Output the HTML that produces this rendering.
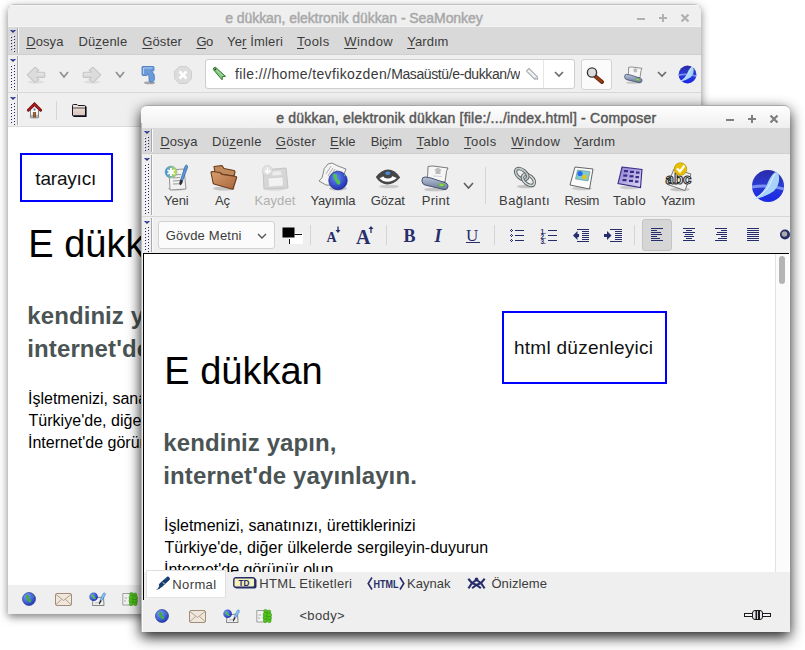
<!DOCTYPE html><html><head><meta charset="utf-8"><style>
html,body{margin:0;padding:0;}
body{width:805px;height:650px;overflow:hidden;position:relative;background:#fff;font-family:"Liberation Sans",sans-serif;}
.t{position:absolute;white-space:nowrap;font-family:"Liberation Sans",sans-serif;}
u{text-decoration:underline;text-underline-offset:2px;text-decoration-thickness:1px;}
svg{overflow:visible}
</style></head><body>
<div style="position:absolute;left:8px;top:4px;width:693px;height:610px;background:#fff;border-radius:6px 6px 0 0;box-shadow:0 3px 9px rgba(0,0,0,0.5);"></div>
<div style="position:absolute;left:8px;top:4px;width:693px;height:23px;background:#efefef;border-radius:6px 6px 0 0;border-top:1px solid #c2c2c2;box-sizing:border-box;"></div>
<div style="position:absolute;left:10px;top:5px;width:689px;height:1px;background:#f6f6f6;"></div>
<div style="position:absolute;left:8px;top:26px;width:693px;height:1px;background:#f3f3f3;"></div>
<div style="position:absolute;left:8px;top:27px;width:693px;height:27px;background:#d9d9d9;"></div>
<div style="position:absolute;left:8px;top:54px;width:693px;height:1px;background:#cfcfcf;"></div>
<div style="position:absolute;left:8px;top:55px;width:693px;height:72px;background:#efefef;"></div>
<div style="position:absolute;left:8px;top:92px;width:693px;height:1px;background:#d8d8d8;"></div>
<div style="position:absolute;left:8px;top:126px;width:693px;height:1px;background:#dcdcdc;"></div>
<div style="position:absolute;left:8px;top:585px;width:693px;height:29px;background:#efefef;"></div>
<div class="t" style="left:225.20px;top:10.55px;font-size:14px;line-height:14px;color:#a8a8a8;letter-spacing:-0.062px;-webkit-text-stroke:0.45px #a8a8a8;">e dükkan, elektronik dükkan - SeaMonkey</div>
<svg style="position:absolute;left:636px;top:13px;" width="12" height="12" viewBox="0 0 12 12"><rect x="1" y="5" width="8" height="2" fill="#b0b0b0"/></svg>
<svg style="position:absolute;left:658px;top:13px;" width="12" height="12" viewBox="0 0 12 12"><rect x="1" y="4" width="8" height="2" fill="#b0b0b0"/><rect x="4" y="1" width="2" height="8" fill="#b0b0b0"/></svg>
<svg style="position:absolute;left:680px;top:13px;" width="12" height="12" viewBox="0 0 12 12"><path d="M1.5 1.5 L8.5 8.5 M8.5 1.5 L1.5 8.5" stroke="#b0b0b0" stroke-width="2.2"/></svg>
<svg style="position:absolute;left:8px;top:27px;" width="12" height="27" viewBox="0 0 12 27"><polygon points="2,3 8,3 5,6" fill="#2a2a8a"/><rect x="4" y="3" width="2" height="1" fill="#6a6ad0"/><rect x="2" y="9" width="1" height="1" fill="#fff"/><rect x="3" y="10" width="1" height="1" fill="#24246e"/><rect x="2" y="12" width="1" height="1" fill="#fff"/><rect x="3" y="13" width="1" height="1" fill="#24246e"/><rect x="2" y="15" width="1" height="1" fill="#fff"/><rect x="3" y="16" width="1" height="1" fill="#24246e"/><rect x="2" y="18" width="1" height="1" fill="#fff"/><rect x="3" y="19" width="1" height="1" fill="#24246e"/><rect x="2" y="21" width="1" height="1" fill="#fff"/><rect x="3" y="22" width="1" height="1" fill="#24246e"/><rect x="5" y="8" width="1" height="1" fill="#fff"/><rect x="6" y="9" width="1" height="1" fill="#24246e"/><rect x="5" y="11" width="1" height="1" fill="#fff"/><rect x="6" y="12" width="1" height="1" fill="#24246e"/><rect x="5" y="14" width="1" height="1" fill="#fff"/><rect x="6" y="15" width="1" height="1" fill="#24246e"/><rect x="5" y="17" width="1" height="1" fill="#fff"/><rect x="6" y="18" width="1" height="1" fill="#24246e"/><rect x="5" y="20" width="1" height="1" fill="#fff"/><rect x="6" y="21" width="1" height="1" fill="#24246e"/><rect x="5" y="23" width="1" height="1" fill="#fff"/><rect x="6" y="24" width="1" height="1" fill="#24246e"/><rect x="9" y="1" width="1" height="25" fill="#a9a9a9"/><rect x="10" y="1" width="1" height="25" fill="#fafafa"/></svg>
<svg style="position:absolute;left:8px;top:55px;" width="12" height="37" viewBox="0 0 12 37"><polygon points="2,4 8,4 5,7" fill="#2a2a8a"/><rect x="4" y="4" width="2" height="1" fill="#6a6ad0"/><rect x="2" y="10" width="1" height="1" fill="#fff"/><rect x="3" y="11" width="1" height="1" fill="#24246e"/><rect x="2" y="13" width="1" height="1" fill="#fff"/><rect x="3" y="14" width="1" height="1" fill="#24246e"/><rect x="2" y="16" width="1" height="1" fill="#fff"/><rect x="3" y="17" width="1" height="1" fill="#24246e"/><rect x="2" y="19" width="1" height="1" fill="#fff"/><rect x="3" y="20" width="1" height="1" fill="#24246e"/><rect x="2" y="22" width="1" height="1" fill="#fff"/><rect x="3" y="23" width="1" height="1" fill="#24246e"/><rect x="2" y="25" width="1" height="1" fill="#fff"/><rect x="3" y="26" width="1" height="1" fill="#24246e"/><rect x="2" y="28" width="1" height="1" fill="#fff"/><rect x="3" y="29" width="1" height="1" fill="#24246e"/><rect x="2" y="31" width="1" height="1" fill="#fff"/><rect x="3" y="32" width="1" height="1" fill="#24246e"/><rect x="5" y="9" width="1" height="1" fill="#fff"/><rect x="6" y="10" width="1" height="1" fill="#24246e"/><rect x="5" y="12" width="1" height="1" fill="#fff"/><rect x="6" y="13" width="1" height="1" fill="#24246e"/><rect x="5" y="15" width="1" height="1" fill="#fff"/><rect x="6" y="16" width="1" height="1" fill="#24246e"/><rect x="5" y="18" width="1" height="1" fill="#fff"/><rect x="6" y="19" width="1" height="1" fill="#24246e"/><rect x="5" y="21" width="1" height="1" fill="#fff"/><rect x="6" y="22" width="1" height="1" fill="#24246e"/><rect x="5" y="24" width="1" height="1" fill="#fff"/><rect x="6" y="25" width="1" height="1" fill="#24246e"/><rect x="5" y="27" width="1" height="1" fill="#fff"/><rect x="6" y="28" width="1" height="1" fill="#24246e"/><rect x="5" y="30" width="1" height="1" fill="#fff"/><rect x="6" y="31" width="1" height="1" fill="#24246e"/><rect x="5" y="33" width="1" height="1" fill="#fff"/><rect x="6" y="34" width="1" height="1" fill="#24246e"/><rect x="9" y="1" width="1" height="35" fill="#a9a9a9"/><rect x="10" y="1" width="1" height="35" fill="#fafafa"/></svg>
<svg style="position:absolute;left:8px;top:93px;" width="12" height="33" viewBox="0 0 12 33"><polygon points="2,4 8,4 5,7" fill="#2a2a8a"/><rect x="4" y="4" width="2" height="1" fill="#6a6ad0"/><rect x="2" y="10" width="1" height="1" fill="#fff"/><rect x="3" y="11" width="1" height="1" fill="#24246e"/><rect x="2" y="13" width="1" height="1" fill="#fff"/><rect x="3" y="14" width="1" height="1" fill="#24246e"/><rect x="2" y="16" width="1" height="1" fill="#fff"/><rect x="3" y="17" width="1" height="1" fill="#24246e"/><rect x="2" y="19" width="1" height="1" fill="#fff"/><rect x="3" y="20" width="1" height="1" fill="#24246e"/><rect x="2" y="22" width="1" height="1" fill="#fff"/><rect x="3" y="23" width="1" height="1" fill="#24246e"/><rect x="2" y="25" width="1" height="1" fill="#fff"/><rect x="3" y="26" width="1" height="1" fill="#24246e"/><rect x="2" y="28" width="1" height="1" fill="#fff"/><rect x="3" y="29" width="1" height="1" fill="#24246e"/><rect x="5" y="9" width="1" height="1" fill="#fff"/><rect x="6" y="10" width="1" height="1" fill="#24246e"/><rect x="5" y="12" width="1" height="1" fill="#fff"/><rect x="6" y="13" width="1" height="1" fill="#24246e"/><rect x="5" y="15" width="1" height="1" fill="#fff"/><rect x="6" y="16" width="1" height="1" fill="#24246e"/><rect x="5" y="18" width="1" height="1" fill="#fff"/><rect x="6" y="19" width="1" height="1" fill="#24246e"/><rect x="5" y="21" width="1" height="1" fill="#fff"/><rect x="6" y="22" width="1" height="1" fill="#24246e"/><rect x="5" y="24" width="1" height="1" fill="#fff"/><rect x="6" y="25" width="1" height="1" fill="#24246e"/><rect x="5" y="27" width="1" height="1" fill="#fff"/><rect x="6" y="28" width="1" height="1" fill="#24246e"/><rect x="5" y="30" width="1" height="1" fill="#fff"/><rect x="6" y="31" width="1" height="1" fill="#24246e"/><rect x="9" y="1" width="1" height="31" fill="#a9a9a9"/><rect x="10" y="1" width="1" height="31" fill="#fafafa"/></svg>
<div class="t" style="left:26.20px;top:34.60px;font-size:13px;line-height:13px;color:#3c3c3c;letter-spacing:0.088px;"><u>D</u>osya</div>
<div class="t" style="left:78.40px;top:34.60px;font-size:13px;line-height:13px;color:#3c3c3c;letter-spacing:0.169px;">Dü<u>z</u>enle</div>
<div class="t" style="left:142.20px;top:34.60px;font-size:13px;line-height:13px;color:#3c3c3c;letter-spacing:0.131px;"><u>G</u>öster</div>
<div class="t" style="left:196.40px;top:34.60px;font-size:13px;line-height:13px;color:#3c3c3c;letter-spacing:-0.622px;"><u>G</u>o</div>
<div class="t" style="left:227.10px;top:34.60px;font-size:13px;line-height:13px;color:#3c3c3c;letter-spacing:0.146px;">Ye<u>r</u> İmleri</div>
<div class="t" style="left:297.00px;top:34.60px;font-size:13px;line-height:13px;color:#3c3c3c;letter-spacing:0.448px;"><u>T</u>ools</div>
<div class="t" style="left:344.20px;top:34.60px;font-size:13px;line-height:13px;color:#3c3c3c;letter-spacing:0.458px;"><u>W</u>indow</div>
<div class="t" style="left:407.20px;top:34.60px;font-size:13px;line-height:13px;color:#3c3c3c;letter-spacing:0.060px;"><u>Y</u>ardım</div>
<svg style="position:absolute;left:24px;top:62px;" width="24" height="24" viewBox="0 0 24 24"><ellipse cx="12" cy="20" rx="8" ry="1.6" fill="#000" opacity="0.07"/><path d="M3.2 12.8 L11.2 5.2 L14.8 8.3 L12.4 10.2 L20 10.2 Q20.8 10.2 20.8 11.2 L20.8 14.4 Q20.8 15.4 20 15.4 L12.4 15.4 L14.8 17.6 L11.2 20.6 Z" fill="#dcdcdc" stroke="#c6c6c6" stroke-width="1.1" stroke-linejoin="round"/><path d="M12.5 12 L19.5 12" stroke="#e8e8e8" stroke-width="1"/></svg>
<svg style="position:absolute;left:58.5px;top:70.5px;" width="10" height="7" viewBox="0 0 10 7"><path d="M1 1 L5.0 6 L9 1" fill="none" stroke="#8c8c8c" stroke-width="1.6"/></svg>
<svg style="position:absolute;left:80px;top:62px;" width="24" height="24" viewBox="0 0 24 24"><g transform="translate(24,0) scale(-1,1)"><ellipse cx="12" cy="20" rx="8" ry="1.6" fill="#000" opacity="0.07"/><path d="M3.2 12.8 L11.2 5.2 L14.8 8.3 L12.4 10.2 L20 10.2 Q20.8 10.2 20.8 11.2 L20.8 14.4 Q20.8 15.4 20 15.4 L12.4 15.4 L14.8 17.6 L11.2 20.6 Z" fill="#dcdcdc" stroke="#c6c6c6" stroke-width="1.1" stroke-linejoin="round"/><path d="M12.5 12 L19.5 12" stroke="#e8e8e8" stroke-width="1"/></g></svg>
<svg style="position:absolute;left:114.5px;top:70.5px;" width="10" height="7" viewBox="0 0 10 7"><path d="M1 1 L5.0 6 L9 1" fill="none" stroke="#8c8c8c" stroke-width="1.6"/></svg>
<svg style="position:absolute;left:140px;top:64px;" width="17" height="21" viewBox="0 0 17 21"><ellipse cx="9.5" cy="18.8" rx="5.5" ry="1.5" fill="#000" opacity="0.3"/><path d="M2.5 2.5 L13 2.5 Q14 2.5 14 3.5 L14 6 Q14 7 13 7 L11.5 7 Q15 10 14.5 14.5 Q14 18.5 11 18.3 Q8.5 18 9 14.5 Q9.5 11.5 7.5 9.5 L7.5 10.5 Q7.5 11.5 6.5 11.5 L3 11.5 Q2 11.5 2 10.5 L2 3 Q2 2.5 2.5 2.5 Z" fill="#6a9ad8" stroke="#4c7cc0" stroke-width="0.9"/><path d="M3.5 4 L12.5 4 M3.5 4 L3.5 10" stroke="#b0cdf2" stroke-width="1.1"/></svg>
<svg style="position:absolute;left:174px;top:66px;" width="18" height="18" viewBox="0 0 18 18"><path d="M5.3 0.5 L12.7 0.5 L17.5 5.3 L17.5 12.7 L12.7 17.5 L5.3 17.5 L0.5 12.7 L0.5 5.3 Z" fill="#dcdcdc" stroke="#cfcfcf"/><path d="M5.5 5.5 L12.5 12.5 M12.5 5.5 L5.5 12.5" stroke="#fff" stroke-width="2.6"/></svg>
<div style="position:absolute;left:205px;top:59px;width:370px;height:30px;background:#fff;border:1px solid #cdcdcd;border-radius:3px;box-sizing:border-box;"></div>
<div style="position:absolute;left:543px;top:60px;width:1px;height:28px;background:#e6e6e6;"></div>
<svg style="position:absolute;left:212px;top:66px;" width="15" height="15" viewBox="0 0 15 15"><path d="M1.3 3.5 Q1.2 1.2 3.5 1.3 L13.5 10.3 L10.4 10.6 L10.1 13.8 Z" fill="#86c884" stroke="#2e7a2a" stroke-width="1" stroke-linejoin="round"/><circle cx="3.3" cy="3.3" r="0.9" fill="#1a3a1a"/><path d="M5 4.5 L11 10" stroke="#b8e4b4" stroke-width="0.8"/></svg>
<div style="position:absolute;left:234px;top:60px;width:286px;height:28px;overflow:hidden">
<div class="t" style="left:1.00px;top:7.15px;font-size:14px;line-height:14px;color:#3a3a3a;letter-spacing:0.370px;">file:///home/tevfikozden/</div>
<div class="t" style="left:157.20px;top:7.15px;font-size:14px;line-height:14px;color:#3a3a3a;letter-spacing:-0.390px;">Masaüstü/e-dukkan/w</div>
</div>
<svg style="position:absolute;left:525px;top:67px;" width="14" height="14" viewBox="0 0 14 14"><path d="M1.5 4 L4 1.5 L12.5 10 L12.5 12.5 L10.5 11 L10 12.5 Z" fill="#f4f4f4" stroke="#a8b0b8" stroke-width="1.1" stroke-linejoin="round"/></svg>
<svg style="position:absolute;left:554px;top:71px;" width="10" height="6" viewBox="0 0 10 6"><path d="M1 1 L5.0 5 L9 1" fill="none" stroke="#6a6a6a" stroke-width="1.6"/></svg>
<div style="position:absolute;left:581px;top:59px;width:31px;height:31px;background:#fbfbfb;border:1px solid #d4d4d4;border-radius:3px;box-sizing:border-box;"></div>
<svg style="position:absolute;left:586px;top:66px;" width="20" height="19" viewBox="0 0 20 19"><path d="M9.5 10.5 L16 16" stroke="#5a2008" stroke-width="4" stroke-linecap="round"/><path d="M9.5 10.5 L15.5 15.5" stroke="#9a3a12" stroke-width="2.4" stroke-linecap="round"/><circle cx="6" cy="6.5" r="4.6" fill="#dcdcdc" stroke="#3a3a3a" stroke-width="1.4"/></svg>
<svg style="position:absolute;left:624px;top:66px" width="20" height="18" viewBox="0 0 30 26"><ellipse cx="14" cy="24.5" rx="11" ry="1.8" fill="#000" opacity="0.18"/><path d="M7 1.5 Q10 1 12 1 L27 3 Q25 6 25 10 L24 17 L6 16 Q7 8 7 1.5 Z" fill="#f6f6f6" stroke="#6a6a6a" stroke-width="1.1"/><path d="M13 5 L17 2.5 L21 5.5 L19.5 5.5 L19.5 9 L14.5 9 L14.5 5.5 Z" fill="#bcbcbc"/><defs><linearGradient id="pb2" x1="0" y1="0" x2="0" y2="1"><stop offset="0" stop-color="#b8c4d8"/><stop offset="1" stop-color="#6a7898"/></linearGradient></defs><path d="M1 15 Q1 12 4 12 L10 13 L25 18 Q27 19 27 21 L26.5 23 Q26 25 23 24.5 L4 20 Q1 19 1 16 Z" fill="url(#pb2)" stroke="#3a4666" stroke-width="1.1"/><ellipse cx="20.5" cy="20" rx="2.8" ry="1.4" fill="#8ee050" stroke="#4a9a20" stroke-width="0.5"/></svg>
<svg style="position:absolute;left:657px;top:71px;" width="10" height="6" viewBox="0 0 10 6"><path d="M1 1 L5.0 5 L9 1" fill="none" stroke="#6a6a6a" stroke-width="1.6"/></svg>
<svg style="position:absolute;left:677.5px;top:64.5px" width="19.0" height="19.0" viewBox="-17 -17 34 34"><defs><linearGradient id="lg1" x1="0" y1="0" x2="0" y2="1"><stop offset="0" stop-color="#2a2aa8"/><stop offset="0.45" stop-color="#2b3bd0"/><stop offset="1" stop-color="#1a28e8"/></linearGradient></defs><circle cx="0" cy="0" r="16" fill="url(#lg1)"/><path d="M-16 -0.5 Q0 -3.5 16 1.5 L16 4.5 Q0 -0.5 -16 2.5 Z" fill="#8aa0f8" opacity="0.85"/><path d="M-15.5 13.5 Q-6 8.5 -1.5 0 Q1.5 -9 6.5 -13.5 Q10.5 -14.5 11 -9.5 Q12 -2 6 5 Q-3 11.5 -15.5 13.5 Z" fill="#a8d4fa"/><path d="M-15.5 13.5 Q-3 8 2 -2 Q4.5 -8 7 -12" fill="none" stroke="#e8f4ff" stroke-width="0.9"/></svg>
<svg style="position:absolute;left:26px;top:101px;" width="17" height="18" viewBox="0 0 17 18"><ellipse cx="8.5" cy="16.5" rx="5" ry="1.2" fill="#000" opacity="0.2"/><path d="M4.5 8.5 L8.5 5 L12.5 8.5 L12.5 16 L4.5 16 Z" fill="#f8f8f8" stroke="#777" stroke-width="0.9"/><path d="M5 14.5 L12 14.5" stroke="#bbb" stroke-width="1.5"/><path d="M2.3 9.3 L8.5 3 L14.7 9.3" fill="none" stroke="#6a0c0c" stroke-width="2.8" stroke-linecap="round"/><path d="M2.6 9 L8.5 3.2 L14.4 9" fill="none" stroke="#b41c1c" stroke-width="1.4" stroke-linecap="round"/><rect x="7.2" y="11.5" width="2.6" height="4.5" fill="#a8642a" stroke="#5a3010" stroke-width="0.5"/><rect x="7.6" y="7.6" width="1.8" height="1.8" fill="#4a6a98"/></svg>
<div style="position:absolute;left:56px;top:101px;width:1px;height:19px;background:#d6d6d6;"></div>
<svg style="position:absolute;left:71px;top:103px;" width="16" height="15" viewBox="0 0 16 15"><defs><linearGradient id="fd" x1="0" y1="0" x2="0" y2="1"><stop offset="0" stop-color="#f2e4dc"/><stop offset="1" stop-color="#d8c4bc"/></linearGradient></defs><path d="M1.5 2.5 Q1.5 1.5 2.5 1.5 L6 1.5 L7 2.5 L13.5 2.5 Q14.5 2.5 14.5 3.5 L14.5 13 L2.5 13 Q1.5 13 1.5 12 Z" fill="url(#fd)" stroke="#1a1a2a" stroke-width="1"/><path d="M2 5 L14 5" stroke="#3a3a3a" stroke-width="0.9"/><path d="M2.5 13.2 L14.8 13.2 L14.8 3.5" fill="none" stroke="#0a0a1a" stroke-width="1.6"/></svg>
<div style="position:absolute;left:20px;top:153px;width:93px;height:49px;border:2px solid #0000ff;box-sizing:border-box;"></div>
<div class="t" style="left:35.30px;top:169.32px;font-size:19px;line-height:19px;color:#111;letter-spacing:-0.187px;">tarayıcı</div>
<div class="t" style="left:28.30px;top:224.73px;font-size:38px;line-height:38px;color:#000;letter-spacing:0.000px;">E dükkan</div>
<div class="t" style="left:27.30px;top:304.28px;font-size:24px;line-height:24px;color:#4a5454;font-weight:bold;letter-spacing:0.080px;">kendiniz yapın,</div>
<div class="t" style="left:27.30px;top:337.28px;font-size:24px;line-height:24px;color:#4a5454;font-weight:bold;letter-spacing:0.110px;">internet'de yayınlayın.</div>
<div class="t" style="left:28.00px;top:390.66px;font-size:16px;line-height:16px;color:#000;letter-spacing:0.000px;">İşletmenizi, sanatınızı, ürettiklerinizi</div>
<div class="t" style="left:28.50px;top:412.96px;font-size:16px;line-height:16px;color:#000;letter-spacing:0.030px;">Türkiye'de, diğer ülkelerde sergileyin-duyurun</div>
<div class="t" style="left:28.00px;top:434.96px;font-size:16px;line-height:16px;color:#000;letter-spacing:0.000px;">İnternet'de görünür olun</div>
<svg style="position:absolute;left:22px;top:592px;" width="14" height="14" viewBox="0 0 14 14"><defs><radialGradient id="gg" cx="0.35" cy="0.3" r="0.75"><stop offset="0" stop-color="#7aa0ff"/><stop offset="1" stop-color="#1f35b8"/></radialGradient></defs><circle cx="7" cy="7" r="6.5" fill="url(#gg)" stroke="#1b2a8a" stroke-width="0.6"/><path d="M4 3 Q6 2 7 4 Q6 6 8 7 Q10 8 9 10 Q7 11 6 9 Q5 7 4 6 Z" fill="#3fae3a"/><path d="M10 3 Q12 4 12 6 L11 5 Z" fill="#3fae3a"/></svg>
<svg style="position:absolute;left:55px;top:593px;" width="17" height="13" viewBox="0 0 17 13"><rect x="0.5" y="0.5" width="16" height="12" rx="1.5" fill="#efe6dc" stroke="#a08c78" stroke-width="1"/><path d="M1 1.5 L8.5 7.5 L16 1.5 M1 11.5 L6.5 6.5 M16 11.5 L10.5 6.5" fill="none" stroke="#b4a08c" stroke-width="1"/></svg>
<svg style="position:absolute;left:88.5px;top:592px;" width="17" height="14" viewBox="0 0 17 14"><path d="M4 6 L14.5 5 L15 13.5 L3.5 13.5 Z" fill="#f0f0f0" stroke="#6a6a6a" stroke-width="0.8"/><path d="M6 11 L11 10.5" stroke="#aaa" stroke-width="0.8"/><defs><radialGradient id="cg" cx="0.35" cy="0.35" r="0.7"><stop offset="0" stop-color="#7a9aff"/><stop offset="1" stop-color="#1a2ab0"/></radialGradient></defs><circle cx="4.6" cy="4.8" r="4.3" fill="url(#cg)"/><path d="M2.5 2.2 Q4.5 2.5 5 4 Q6 5.5 7 6.5 Q6 8 4.5 6.5 Q3.5 5 2.3 4 Z" fill="#50c050"/><path d="M15.5 0.8 Q17 1.5 16 3.5 L12.5 9 L11 8.2 L14 2 Q14.5 0.8 15.5 0.8 Z" fill="#8ac4f4" stroke="#3a7ac0" stroke-width="0.6"/><path d="M11 8.2 L12.5 9 L10.5 12.5 L9.8 12 Z" fill="#222"/></svg>
<svg style="position:absolute;left:122px;top:592px;" width="16" height="14" viewBox="0 0 16 14"><path d="M0.8 1.5 L10 1.5 L10 13 L0.8 13 Z" fill="#f2f2f2" stroke="#8a8a8a" stroke-width="0.8"/><path d="M2.5 6 L5 6 M2 9 L4 9" stroke="#aaa" stroke-width="1"/><g fill="#52c41a" stroke="#2a8a0a" stroke-width="0.5"><circle cx="9.5" cy="2.2" r="1.8"/><circle cx="13" cy="2.8" r="1.8"/><rect x="7.2" y="3.5" width="4.5" height="4" rx="1.5"/><rect x="11" y="4" width="4.5" height="4" rx="1.5"/><rect x="7" y="7" width="4.5" height="3.5" rx="1.5"/><rect x="11" y="7.5" width="4.5" height="3.5" rx="1.5"/><rect x="7.5" y="10" width="3.5" height="3.5" rx="1.2"/><rect x="11.5" y="10.5" width="3.5" height="3" rx="1.2"/></g></svg>
<div style="position:absolute;left:141px;top:105px;width:649px;height:527px;background:#efefef;border-radius:6px 6px 0 0;box-shadow:0 5px 14px rgba(0,0,0,0.9);"></div>
<div style="position:absolute;left:141px;top:105px;width:649px;height:23px;background:linear-gradient(#fefefe,#efefef);border-radius:6px 6px 0 0;border-top:1px solid #a8a8a8;box-sizing:border-box;"></div>
<div style="position:absolute;left:141px;top:123px;width:1px;height:509px;background:#b8b8b8;"></div>
<div style="position:absolute;left:142px;top:600px;width:1px;height:32px;background:#fafafa;"></div>
<div style="position:absolute;left:142px;top:128px;width:648px;height:25px;background:#d9d9d9;"></div>
<div style="position:absolute;left:142px;top:153px;width:648px;height:1px;background:#cfcfcf;"></div>
<div style="position:absolute;left:142px;top:216px;width:648px;height:1px;background:#d6d6d6;"></div>
<div class="t" style="left:276.20px;top:110.75px;font-size:14px;line-height:14px;color:#575757;letter-spacing:0.211px;-webkit-text-stroke:0.45px #575757;">e dükkan, elektronik dükkan [file:/.../index.html] - Composer</div>
<svg style="position:absolute;left:725px;top:114px;" width="12" height="12" viewBox="0 0 12 12"><rect x="1" y="5" width="8" height="2" fill="#7e7e7e"/></svg>
<svg style="position:absolute;left:747px;top:114px;" width="12" height="12" viewBox="0 0 12 12"><rect x="1" y="4" width="8" height="2" fill="#7e7e7e"/><rect x="4" y="1" width="2" height="8" fill="#7e7e7e"/></svg>
<svg style="position:absolute;left:769px;top:114px;" width="12" height="12" viewBox="0 0 12 12"><path d="M1.5 1.5 L8.5 8.5 M8.5 1.5 L1.5 8.5" stroke="#7e7e7e" stroke-width="2.2"/></svg>
<svg style="position:absolute;left:142px;top:128px;" width="12" height="25" viewBox="0 0 12 25"><polygon points="2,3 8,3 5,6" fill="#2a2a8a"/><rect x="4" y="3" width="2" height="1" fill="#6a6ad0"/><rect x="2" y="9" width="1" height="1" fill="#fff"/><rect x="3" y="10" width="1" height="1" fill="#24246e"/><rect x="2" y="12" width="1" height="1" fill="#fff"/><rect x="3" y="13" width="1" height="1" fill="#24246e"/><rect x="2" y="15" width="1" height="1" fill="#fff"/><rect x="3" y="16" width="1" height="1" fill="#24246e"/><rect x="2" y="18" width="1" height="1" fill="#fff"/><rect x="3" y="19" width="1" height="1" fill="#24246e"/><rect x="2" y="21" width="1" height="1" fill="#fff"/><rect x="3" y="22" width="1" height="1" fill="#24246e"/><rect x="5" y="8" width="1" height="1" fill="#fff"/><rect x="6" y="9" width="1" height="1" fill="#24246e"/><rect x="5" y="11" width="1" height="1" fill="#fff"/><rect x="6" y="12" width="1" height="1" fill="#24246e"/><rect x="5" y="14" width="1" height="1" fill="#fff"/><rect x="6" y="15" width="1" height="1" fill="#24246e"/><rect x="5" y="17" width="1" height="1" fill="#fff"/><rect x="6" y="18" width="1" height="1" fill="#24246e"/><rect x="5" y="20" width="1" height="1" fill="#fff"/><rect x="6" y="21" width="1" height="1" fill="#24246e"/><rect x="9" y="1" width="1" height="23" fill="#a9a9a9"/><rect x="10" y="1" width="1" height="23" fill="#fafafa"/></svg>
<svg style="position:absolute;left:142px;top:154px;" width="12" height="62" viewBox="0 0 12 62"><polygon points="2,4 8,4 5,7" fill="#2a2a8a"/><rect x="4" y="4" width="2" height="1" fill="#6a6ad0"/><rect x="2" y="10" width="1" height="1" fill="#fff"/><rect x="3" y="11" width="1" height="1" fill="#24246e"/><rect x="2" y="13" width="1" height="1" fill="#fff"/><rect x="3" y="14" width="1" height="1" fill="#24246e"/><rect x="2" y="16" width="1" height="1" fill="#fff"/><rect x="3" y="17" width="1" height="1" fill="#24246e"/><rect x="2" y="19" width="1" height="1" fill="#fff"/><rect x="3" y="20" width="1" height="1" fill="#24246e"/><rect x="2" y="22" width="1" height="1" fill="#fff"/><rect x="3" y="23" width="1" height="1" fill="#24246e"/><rect x="2" y="25" width="1" height="1" fill="#fff"/><rect x="3" y="26" width="1" height="1" fill="#24246e"/><rect x="2" y="28" width="1" height="1" fill="#fff"/><rect x="3" y="29" width="1" height="1" fill="#24246e"/><rect x="2" y="31" width="1" height="1" fill="#fff"/><rect x="3" y="32" width="1" height="1" fill="#24246e"/><rect x="2" y="34" width="1" height="1" fill="#fff"/><rect x="3" y="35" width="1" height="1" fill="#24246e"/><rect x="2" y="37" width="1" height="1" fill="#fff"/><rect x="3" y="38" width="1" height="1" fill="#24246e"/><rect x="2" y="40" width="1" height="1" fill="#fff"/><rect x="3" y="41" width="1" height="1" fill="#24246e"/><rect x="2" y="43" width="1" height="1" fill="#fff"/><rect x="3" y="44" width="1" height="1" fill="#24246e"/><rect x="2" y="46" width="1" height="1" fill="#fff"/><rect x="3" y="47" width="1" height="1" fill="#24246e"/><rect x="2" y="49" width="1" height="1" fill="#fff"/><rect x="3" y="50" width="1" height="1" fill="#24246e"/><rect x="2" y="52" width="1" height="1" fill="#fff"/><rect x="3" y="53" width="1" height="1" fill="#24246e"/><rect x="2" y="55" width="1" height="1" fill="#fff"/><rect x="3" y="56" width="1" height="1" fill="#24246e"/><rect x="2" y="58" width="1" height="1" fill="#fff"/><rect x="3" y="59" width="1" height="1" fill="#24246e"/><rect x="5" y="9" width="1" height="1" fill="#fff"/><rect x="6" y="10" width="1" height="1" fill="#24246e"/><rect x="5" y="12" width="1" height="1" fill="#fff"/><rect x="6" y="13" width="1" height="1" fill="#24246e"/><rect x="5" y="15" width="1" height="1" fill="#fff"/><rect x="6" y="16" width="1" height="1" fill="#24246e"/><rect x="5" y="18" width="1" height="1" fill="#fff"/><rect x="6" y="19" width="1" height="1" fill="#24246e"/><rect x="5" y="21" width="1" height="1" fill="#fff"/><rect x="6" y="22" width="1" height="1" fill="#24246e"/><rect x="5" y="24" width="1" height="1" fill="#fff"/><rect x="6" y="25" width="1" height="1" fill="#24246e"/><rect x="5" y="27" width="1" height="1" fill="#fff"/><rect x="6" y="28" width="1" height="1" fill="#24246e"/><rect x="5" y="30" width="1" height="1" fill="#fff"/><rect x="6" y="31" width="1" height="1" fill="#24246e"/><rect x="5" y="33" width="1" height="1" fill="#fff"/><rect x="6" y="34" width="1" height="1" fill="#24246e"/><rect x="5" y="36" width="1" height="1" fill="#fff"/><rect x="6" y="37" width="1" height="1" fill="#24246e"/><rect x="5" y="39" width="1" height="1" fill="#fff"/><rect x="6" y="40" width="1" height="1" fill="#24246e"/><rect x="5" y="42" width="1" height="1" fill="#fff"/><rect x="6" y="43" width="1" height="1" fill="#24246e"/><rect x="5" y="45" width="1" height="1" fill="#fff"/><rect x="6" y="46" width="1" height="1" fill="#24246e"/><rect x="5" y="48" width="1" height="1" fill="#fff"/><rect x="6" y="49" width="1" height="1" fill="#24246e"/><rect x="5" y="51" width="1" height="1" fill="#fff"/><rect x="6" y="52" width="1" height="1" fill="#24246e"/><rect x="5" y="54" width="1" height="1" fill="#fff"/><rect x="6" y="55" width="1" height="1" fill="#24246e"/><rect x="5" y="57" width="1" height="1" fill="#fff"/><rect x="6" y="58" width="1" height="1" fill="#24246e"/><rect x="9" y="1" width="1" height="60" fill="#a9a9a9"/><rect x="10" y="1" width="1" height="60" fill="#fafafa"/></svg>
<svg style="position:absolute;left:142px;top:217px;" width="12" height="36" viewBox="0 0 12 36"><polygon points="2,4 8,4 5,7" fill="#2a2a8a"/><rect x="4" y="4" width="2" height="1" fill="#6a6ad0"/><rect x="2" y="10" width="1" height="1" fill="#fff"/><rect x="3" y="11" width="1" height="1" fill="#24246e"/><rect x="2" y="13" width="1" height="1" fill="#fff"/><rect x="3" y="14" width="1" height="1" fill="#24246e"/><rect x="2" y="16" width="1" height="1" fill="#fff"/><rect x="3" y="17" width="1" height="1" fill="#24246e"/><rect x="2" y="19" width="1" height="1" fill="#fff"/><rect x="3" y="20" width="1" height="1" fill="#24246e"/><rect x="2" y="22" width="1" height="1" fill="#fff"/><rect x="3" y="23" width="1" height="1" fill="#24246e"/><rect x="2" y="25" width="1" height="1" fill="#fff"/><rect x="3" y="26" width="1" height="1" fill="#24246e"/><rect x="2" y="28" width="1" height="1" fill="#fff"/><rect x="3" y="29" width="1" height="1" fill="#24246e"/><rect x="2" y="31" width="1" height="1" fill="#fff"/><rect x="3" y="32" width="1" height="1" fill="#24246e"/><rect x="5" y="9" width="1" height="1" fill="#fff"/><rect x="6" y="10" width="1" height="1" fill="#24246e"/><rect x="5" y="12" width="1" height="1" fill="#fff"/><rect x="6" y="13" width="1" height="1" fill="#24246e"/><rect x="5" y="15" width="1" height="1" fill="#fff"/><rect x="6" y="16" width="1" height="1" fill="#24246e"/><rect x="5" y="18" width="1" height="1" fill="#fff"/><rect x="6" y="19" width="1" height="1" fill="#24246e"/><rect x="5" y="21" width="1" height="1" fill="#fff"/><rect x="6" y="22" width="1" height="1" fill="#24246e"/><rect x="5" y="24" width="1" height="1" fill="#fff"/><rect x="6" y="25" width="1" height="1" fill="#24246e"/><rect x="5" y="27" width="1" height="1" fill="#fff"/><rect x="6" y="28" width="1" height="1" fill="#24246e"/><rect x="5" y="30" width="1" height="1" fill="#fff"/><rect x="6" y="31" width="1" height="1" fill="#24246e"/><rect x="5" y="33" width="1" height="1" fill="#fff"/><rect x="6" y="34" width="1" height="1" fill="#24246e"/><rect x="9" y="1" width="1" height="34" fill="#a9a9a9"/><rect x="10" y="1" width="1" height="34" fill="#fafafa"/></svg>
<div class="t" style="left:160.20px;top:134.70px;font-size:13px;line-height:13px;color:#3c3c3c;letter-spacing:0.088px;"><u>D</u>osya</div>
<div class="t" style="left:212.10px;top:134.70px;font-size:13px;line-height:13px;color:#3c3c3c;letter-spacing:0.283px;">Dü<u>z</u>enle</div>
<div class="t" style="left:275.80px;top:134.70px;font-size:13px;line-height:13px;color:#3c3c3c;letter-spacing:0.214px;"><u>G</u>öster</div>
<div class="t" style="left:330.10px;top:134.70px;font-size:13px;line-height:13px;color:#3c3c3c;letter-spacing:0.051px;"><u>E</u>kle</div>
<div class="t" style="left:370.70px;top:134.70px;font-size:13px;line-height:13px;color:#3c3c3c;letter-spacing:-0.096px;">Bi<u>ç</u>im</div>
<div class="t" style="left:416.50px;top:134.70px;font-size:13px;line-height:13px;color:#3c3c3c;letter-spacing:0.381px;"><u>T</u>ablo</div>
<div class="t" style="left:464.00px;top:134.70px;font-size:13px;line-height:13px;color:#3c3c3c;letter-spacing:0.448px;"><u>T</u>ools</div>
<div class="t" style="left:511.20px;top:134.70px;font-size:13px;line-height:13px;color:#3c3c3c;letter-spacing:0.475px;"><u>W</u>indow</div>
<div class="t" style="left:573.80px;top:134.70px;font-size:13px;line-height:13px;color:#3c3c3c;letter-spacing:0.077px;"><u>Y</u>ardım</div>
<svg style="position:absolute;left:164px;top:164px;" width="25" height="27" viewBox="0 0 25 27"><ellipse cx="13" cy="24.5" rx="9" ry="2" fill="#000" opacity="0.18"/><path d="M5 6 L20 5 L22 25 L6 26 Z" fill="#f2f2f2" stroke="#8a8a8a" stroke-width="0.9"/><path d="M9 11 L17 10.5 M9 14 L16 13.5 M9 17 L17 16.5 M9 20 L15 19.8" stroke="#9a9a9a" stroke-width="1"/><defs><linearGradient id="ys" x1="0" y1="0" x2="1" y2="0"><stop offset="0" stop-color="#3a8ae8"/><stop offset="1" stop-color="#c8e838"/></linearGradient></defs><circle cx="7" cy="8" r="6" fill="url(#ys)" stroke="#6aa0c0" stroke-width="0.5"/><path d="M7 4 L7 12 M3.5 6 L10.5 10 M3.5 10 L10.5 6" stroke="#fff" stroke-width="1.8"/><path d="M22.5 1 Q24 1.5 23.5 3.5 L18.5 17 L16.5 16.2 L21 2.5 Q21.5 1 22.5 1 Z" fill="#5a9ae0" stroke="#2a5a9a" stroke-width="0.7"/><path d="M16.5 16.2 L18.5 17 L17.5 20 Q16 22 15.5 19.5 Z" fill="#333" stroke="#111" stroke-width="0.6"/></svg>
<svg style="position:absolute;left:210px;top:164px;" width="28" height="27" viewBox="0 0 28 27"><ellipse cx="14" cy="24.5" rx="11" ry="2" fill="#000" opacity="0.18"/><defs><linearGradient id="fo" x1="0" y1="0" x2="1" y2="1"><stop offset="0" stop-color="#d9a070"/><stop offset="1" stop-color="#a8653a"/></linearGradient></defs><path d="M4 2.5 L12 1.5 L14 4.5 L24 6.5 Q25 7 25 8 L24 12 L5 9 Z" fill="#c08a5a" stroke="#6a3a1a" stroke-width="1.1" stroke-linejoin="round"/><path d="M1 8.5 Q1 7.5 2 7.5 L10 8.5 L12 10.5 L26 12.5 Q27 13 26.5 14 L23 25 Q22.5 25.5 21.5 25 L4 20 Q3 19.5 3 18.5 Z" fill="url(#fo)" stroke="#6a3a1a" stroke-width="1.1" stroke-linejoin="round"/></svg>
<svg style="position:absolute;left:261px;top:165px;" width="28" height="26" viewBox="0 0 28 26"><ellipse cx="14" cy="24" rx="10" ry="1.8" fill="#000" opacity="0.08"/><path d="M2 5 L25 3 L27 23 L3 24 Z" fill="#d6d6d6" stroke="#c4c4c4" stroke-width="1"/><path d="M11 6.5 L20 6 L20.5 10 L11.5 10.5 Z" fill="#ececec"/><path d="M7 13 L22 12 L22.5 21 L7.5 22 Z" fill="#f2f2f2" stroke="#cacaca" stroke-width="0.6"/><circle cx="6.5" cy="5.5" r="5" fill="#e2e2e2" stroke="#cfcfcf" stroke-width="0.8"/><path d="M6.5 2.5 L6.5 7.5 M4 5.5 L6.5 8 L9 5.5" fill="none" stroke="#fff" stroke-width="1.4"/></svg>
<svg style="position:absolute;left:318px;top:162px;" width="30" height="29" viewBox="0 0 30 29"><ellipse cx="20" cy="26.5" rx="9" ry="2" fill="#000" opacity="0.18"/><path d="M1 19 Q5 16 5 12 Q5 6 10 2 L14 1 Q19 4 28 7 L26 12 Q20 14 16 22 Q12 24 8 23 Z" fill="#f4f4f4" stroke="#7a7a7a" stroke-width="0.9"/><path d="M8 12 L13 4 M10 14 L15 6 M12 15 L17 7 M14 16 L19 8" stroke="#a0a0a0" stroke-width="0.8"/><defs><radialGradient id="gl" cx="0.4" cy="0.35" r="0.7"><stop offset="0" stop-color="#6a8aff"/><stop offset="1" stop-color="#1a2aa8"/></radialGradient></defs><circle cx="20" cy="18.5" r="9.3" fill="url(#gl)" stroke="#10187a" stroke-width="0.6"/><path d="M15 12 Q18 11 19 13 Q18 16 21 18 Q23 19 22 22 Q20 24 18.5 21 Q17 18 15.5 16 Z" fill="#50c050"/><path d="M26 12 Q28 13 27.5 14.5 L26 13.5 Z" fill="#50c050"/></svg>
<svg style="position:absolute;left:375px;top:168px;" width="26" height="21" viewBox="0 0 26 21"><ellipse cx="14" cy="18.5" rx="10" ry="1.8" fill="#000" opacity="0.15"/><path d="M0.8 9 Q6.5 1.5 13 1.5 Q20 1.5 25.2 9.5 Q19 16.5 12 16.5 Q5 16 0.8 9 Z" fill="#464646"/><path d="M4.5 10.2 Q8.5 7.5 13 7.5 Q18 7.5 21.8 10 Q17.5 13.8 12.5 13.8 Q8 13.8 4.5 10.2 Z" fill="#fff"/><ellipse cx="12.8" cy="6.2" rx="5.2" ry="4.2" fill="#464646"/><ellipse cx="12.8" cy="5.2" rx="2.6" ry="1.7" fill="#4a8ad8"/></svg>
<svg style="position:absolute;left:421px;top:165px;" width="30" height="26" viewBox="0 0 30 26"><ellipse cx="14" cy="24.5" rx="11" ry="1.8" fill="#000" opacity="0.18"/><path d="M7 1.5 Q10 1 12 1 L27 3 Q25 6 25 10 L24 17 L6 16 Q7 8 7 1.5 Z" fill="#f6f6f6" stroke="#6a6a6a" stroke-width="0.9"/><path d="M13 5 L17 2.5 L21 5.5 L19.5 5.5 L19.5 9 L14.5 9 L14.5 5.5 Z" fill="#bcbcbc"/><path d="M12 11 L21 11.5" stroke="#c8c8c8" stroke-width="0.8"/><defs><linearGradient id="pb" x1="0" y1="0" x2="0" y2="1"><stop offset="0" stop-color="#b8c4d8"/><stop offset="1" stop-color="#6a7898"/></linearGradient></defs><path d="M1 15 Q1 12 4 12 L10 13 L25 18 Q27 19 27 21 L26.5 23 Q26 25 23 24.5 L4 20 Q1 19 1 16 Z" fill="url(#pb)" stroke="#3a4666" stroke-width="0.9"/><ellipse cx="20.5" cy="20" rx="2.8" ry="1.4" fill="#8ee050" stroke="#4a9a20" stroke-width="0.5"/></svg>
<svg style="position:absolute;left:513px;top:166px;" width="24" height="23" viewBox="0 0 24 23"><ellipse cx="13" cy="20.5" rx="9" ry="1.8" fill="#000" opacity="0.18"/><g transform="rotate(40 12 11)"><ellipse cx="7.5" cy="11" rx="7" ry="4.2" fill="none" stroke="#5a6262" stroke-width="3.4"/><ellipse cx="7.5" cy="11" rx="7" ry="4.2" fill="none" stroke="#c4cccc" stroke-width="1.6"/><ellipse cx="16.5" cy="11" rx="7" ry="4.2" fill="none" stroke="#5a6262" stroke-width="3.4"/><ellipse cx="16.5" cy="11" rx="7" ry="4.2" fill="none" stroke="#d0d8d8" stroke-width="1.6"/><path d="M10.5 7 A7 4.2 0 0 1 14.5 11" fill="none" stroke="#5a6262" stroke-width="3.4"/><path d="M10.5 7 A7 4.2 0 0 1 14.5 11" fill="none" stroke="#c4cccc" stroke-width="1.6"/></g></svg>
<svg style="position:absolute;left:569px;top:166px;" width="26" height="25" viewBox="0 0 26 25"><ellipse cx="13" cy="22.5" rx="10" ry="1.8" fill="#000" opacity="0.15"/><path d="M6 1 L24 3 L20.5 23 L1 19 Z" fill="#fbfbfb" stroke="#555" stroke-width="0.9"/><path d="M8.5 4 L21 5.5 L19 15 L6.5 13 Z" fill="#7ccccc" stroke="#5a7a7a" stroke-width="0.5"/><circle cx="11" cy="7.5" r="2.6" fill="#2a6af0"/><circle cx="15.5" cy="11" r="2.2" fill="#f0c010"/></svg>
<svg style="position:absolute;left:617px;top:166px;" width="27" height="24" viewBox="0 0 27 24"><ellipse cx="13" cy="21.5" rx="10" ry="1.8" fill="#000" opacity="0.15"/><defs><linearGradient id="tb" x1="0" y1="0" x2="1" y2="1"><stop offset="0" stop-color="#8a7ad0"/><stop offset="1" stop-color="#e0dcf4"/></linearGradient></defs><path d="M5 1 L25 3.5 L23.5 21.5 L1 17.5 Z" fill="url(#tb)" stroke="#3a2a88" stroke-width="1.1"/><g fill="#3a2a88"><rect x="7" y="4" width="4" height="2.2"/><rect x="13" y="4.8" width="4" height="2.2"/><rect x="19" y="5.5" width="3.5" height="2.2"/><rect x="6.3" y="8.5" width="4" height="2.2"/><rect x="12.5" y="9.2" width="4" height="2.2"/><rect x="18.5" y="10" width="3.5" height="2.2"/><rect x="5.5" y="13" width="4" height="2.2"/><rect x="12" y="13.8" width="4" height="2.2"/><rect x="18" y="14.5" width="3.5" height="2.2"/></g></svg>
<svg style="position:absolute;left:665px;top:162px;" width="28" height="30" viewBox="0 0 28 30"><ellipse cx="15" cy="27.5" rx="10" ry="1.8" fill="#000" opacity="0.18"/><path d="M9 7 L26 12 L20 28.5 L2.5 22.5 Z" fill="#f2f2f2" stroke="#6a6a6a" stroke-width="0.9"/><text x="0.5" y="21.5" font-size="14" font-weight="bold" font-family="Liberation Sans" fill="#fff" stroke="#2a2a2a" stroke-width="1" textLength="26" lengthAdjust="spacingAndGlyphs">abc</text><circle cx="15.5" cy="7" r="6.3" fill="#e8c000" stroke="#b08a00" stroke-width="0.6"/><path d="M12 6.5 L15 9.5 L19.5 3.5" fill="none" stroke="#fff" stroke-width="2.3"/></svg>
<div class="t" style="left:164.00px;top:194.00px;font-size:13px;line-height:13px;color:#3c3c3c;letter-spacing:-0.036px;">Yeni</div>
<div class="t" style="left:214.90px;top:194.00px;font-size:13px;line-height:13px;color:#3c3c3c;letter-spacing:-0.086px;">Aç</div>
<div class="t" style="left:254.50px;top:194.00px;font-size:13px;line-height:13px;color:#b0b0b0;letter-spacing:0.069px;">Kaydet</div>
<div class="t" style="left:310.40px;top:194.00px;font-size:13px;line-height:13px;color:#3c3c3c;letter-spacing:-0.171px;">Yayımla</div>
<div class="t" style="left:370.80px;top:194.00px;font-size:13px;line-height:13px;color:#3c3c3c;letter-spacing:-0.138px;">Gözat</div>
<div class="t" style="left:421.70px;top:194.00px;font-size:13px;line-height:13px;color:#3c3c3c;letter-spacing:0.273px;">Print</div>
<div class="t" style="left:499.10px;top:194.00px;font-size:13px;line-height:13px;color:#3c3c3c;letter-spacing:0.398px;">Bağlantı</div>
<div class="t" style="left:564.40px;top:194.00px;font-size:13px;line-height:13px;color:#3c3c3c;letter-spacing:-0.449px;">Resim</div>
<div class="t" style="left:613.10px;top:194.00px;font-size:13px;line-height:13px;color:#3c3c3c;letter-spacing:0.361px;">Tablo</div>
<div class="t" style="left:660.90px;top:194.00px;font-size:13px;line-height:13px;color:#3c3c3c;letter-spacing:-0.395px;">Yazım</div>
<svg style="position:absolute;left:463px;top:181.5px;" width="11" height="7" viewBox="0 0 11 7"><path d="M1 1 L5.5 6 L10 1" fill="none" stroke="#5e5e5e" stroke-width="1.6"/></svg>
<div style="position:absolute;left:485px;top:167px;width:1px;height:37px;background:#d4d4d4;"></div>
<svg style="position:absolute;left:751px;top:169px" width="34" height="34" viewBox="-17 -17 34 34"><defs><linearGradient id="lg2" x1="0" y1="0" x2="0" y2="1"><stop offset="0" stop-color="#2a2aa8"/><stop offset="0.45" stop-color="#2b3bd0"/><stop offset="1" stop-color="#1a28e8"/></linearGradient></defs><circle cx="0" cy="0" r="16" fill="url(#lg2)"/><path d="M-16 -0.5 Q0 -3.5 16 1.5 L16 4.5 Q0 -0.5 -16 2.5 Z" fill="#8aa0f8" opacity="0.85"/><path d="M-15.5 13.5 Q-6 8.5 -1.5 0 Q1.5 -9 6.5 -13.5 Q10.5 -14.5 11 -9.5 Q12 -2 6 5 Q-3 11.5 -15.5 13.5 Z" fill="#a8d4fa"/><path d="M-15.5 13.5 Q-3 8 2 -2 Q4.5 -8 7 -12" fill="none" stroke="#e8f4ff" stroke-width="0.9"/></svg>
<div style="position:absolute;left:158px;top:221px;width:117px;height:28px;background:#fbfbfb;border:1px solid #d2d2d2;border-radius:3px;box-sizing:border-box;"></div>
<div class="t" style="left:165.70px;top:228.60px;font-size:13px;line-height:13px;color:#3c3c3c;letter-spacing:0.207px;">Gövde Metni</div>
<svg style="position:absolute;left:257px;top:232.5px;" width="10" height="6" viewBox="0 0 10 6"><path d="M1 1 L5.0 5 L9 1" fill="none" stroke="#555" stroke-width="1.4"/></svg>
<svg style="position:absolute;left:282px;top:227px;" width="22" height="18" viewBox="0 0 22 18"><rect x="7" y="6" width="14" height="11" fill="#fff"/><path d="M12.5 7.5 L20 7.5 M7.5 12 L7.5 17" stroke="#111" stroke-width="1"/><rect x="0.5" y="0.5" width="12" height="10" fill="#000"/></svg>
<div style="position:absolute;left:310px;top:225px;width:1px;height:20px;background:#d4d4d4;"></div>
<div class="t" style="left:326.50px;top:230.65px;font-size:14px;line-height:14px;color:#272d6a;letter-spacing:0.000px;font-family:'Liberation Serif',serif;font-weight:bold;">A</div>
<svg style="position:absolute;left:334px;top:226px;" width="8" height="8" viewBox="0 0 8 8"><path d="M4 0.5 L4 5" stroke="#272d6a" stroke-width="1.3"/><path d="M1.5 4 L6.5 4 L4 7 Z" fill="#272d6a"/></svg>
<div class="t" style="left:356.00px;top:226.57px;font-size:20px;line-height:20px;color:#272d6a;letter-spacing:0.000px;font-family:'Liberation Serif',serif;font-weight:bold;">A</div>
<svg style="position:absolute;left:367px;top:225px;" width="8" height="9" viewBox="0 0 8 9"><path d="M4 3 L4 8" stroke="#272d6a" stroke-width="1.3"/><path d="M1.5 4 L6.5 4 L4 1 Z" fill="#272d6a"/></svg>
<div style="position:absolute;left:386px;top:225px;width:1px;height:20px;background:#d4d4d4;"></div>
<div class="t" style="left:403.50px;top:226.56px;font-size:18px;line-height:18px;color:#272d6a;font-weight:bold;letter-spacing:0.000px;font-family:'Liberation Serif',serif;">B</div>
<div class="t" style="left:434.50px;top:226.56px;font-size:18px;line-height:18px;color:#272d6a;font-weight:bold;letter-spacing:0.000px;font-family:'Liberation Serif',serif;font-style:italic;">I</div>
<div class="t" style="left:466.00px;top:226.81px;font-size:17px;line-height:17px;color:#272d6a;letter-spacing:0.000px;font-family:'Liberation Serif',serif;">U</div>
<div style="position:absolute;left:466px;top:242px;width:14px;height:1px;background:#272d6a;"></div>
<div style="position:absolute;left:494px;top:225px;width:1px;height:20px;background:#d4d4d4;"></div>
<svg style="position:absolute;left:509px;top:228px;shape-rendering:crispEdges;" width="20" height="16" viewBox="0 0 20 16"><rect x="6" y="2" width="9" height="1" fill="#272d6a"/><rect x="6" y="7" width="9" height="1" fill="#272d6a"/><rect x="6" y="12" width="9" height="1" fill="#272d6a"/><rect x="2" y="1" width="1" height="1" fill="#272d6a"/><rect x="1" y="2" width="1" height="1" fill="#272d6a"/><rect x="3" y="2" width="1" height="1" fill="#272d6a"/><rect x="2" y="3" width="1" height="1" fill="#272d6a"/><rect x="2" y="6" width="1" height="1" fill="#272d6a"/><rect x="1" y="7" width="1" height="1" fill="#272d6a"/><rect x="3" y="7" width="1" height="1" fill="#272d6a"/><rect x="2" y="8" width="1" height="1" fill="#272d6a"/><rect x="2" y="11" width="1" height="1" fill="#272d6a"/><rect x="1" y="12" width="1" height="1" fill="#272d6a"/><rect x="3" y="12" width="1" height="1" fill="#272d6a"/><rect x="2" y="13" width="1" height="1" fill="#272d6a"/></svg>
<svg style="position:absolute;left:541px;top:228px;shape-rendering:crispEdges;" width="20" height="16" viewBox="0 0 20 16"><rect x="7" y="2" width="9" height="1" fill="#272d6a"/><rect x="7" y="7" width="9" height="1" fill="#272d6a"/><rect x="7" y="12" width="9" height="1" fill="#272d6a"/><text x="-0.5" y="5.5" font-size="6.5" font-weight="bold" fill="#272d6a" font-family="Liberation Sans">1.</text><text x="-0.5" y="10.5" font-size="6.5" font-weight="bold" fill="#272d6a" font-family="Liberation Sans">2.</text><text x="-0.5" y="15.5" font-size="6.5" font-weight="bold" fill="#272d6a" font-family="Liberation Sans">3.</text></svg>
<svg style="position:absolute;left:573px;top:228px;shape-rendering:crispEdges;" width="20" height="16" viewBox="0 0 20 16"><rect x="4" y="1" width="12" height="1" fill="#272d6a"/><rect x="9" y="3" width="7" height="1" fill="#272d6a"/><rect x="9" y="5" width="7" height="1" fill="#272d6a"/><rect x="9" y="7" width="7" height="1" fill="#272d6a"/><rect x="9" y="9" width="7" height="1" fill="#272d6a"/><rect x="9" y="11" width="7" height="1" fill="#272d6a"/><rect x="4" y="13" width="12" height="1" fill="#272d6a"/><path d="M0 7.5 L4.5 3 L4.5 12 Z" fill="#272d6a" style="shape-rendering:auto"/><rect x="3" y="6" width="3" height="3" fill="#272d6a"/></svg>
<svg style="position:absolute;left:604px;top:228px;shape-rendering:crispEdges;" width="20" height="16" viewBox="0 0 20 16"><rect x="6" y="1" width="12" height="1" fill="#272d6a"/><rect x="11" y="3" width="7" height="1" fill="#272d6a"/><rect x="11" y="5" width="7" height="1" fill="#272d6a"/><rect x="11" y="7" width="7" height="1" fill="#272d6a"/><rect x="11" y="9" width="7" height="1" fill="#272d6a"/><rect x="11" y="11" width="7" height="1" fill="#272d6a"/><rect x="6" y="13" width="12" height="1" fill="#272d6a"/><path d="M7.5 7.5 L3 3 L3 12 Z" fill="#272d6a" style="shape-rendering:auto"/><rect x="0" y="6" width="4" height="3" fill="#272d6a"/></svg>
<div style="position:absolute;left:634px;top:225px;width:1px;height:20px;background:#d4d4d4;"></div>
<div style="position:absolute;left:642px;top:219px;width:30px;height:32px;background:#d6d6d6;border:1px solid #c4c4c4;border-radius:3px;box-sizing:border-box;"></div>
<svg style="position:absolute;left:651px;top:228px;shape-rendering:crispEdges;" width="20" height="16" viewBox="0 0 20 16"><rect x="0" y="0" width="12" height="1" fill="#272d6a"/><rect x="0" y="2" width="6" height="1" fill="#272d6a"/><rect x="0" y="4" width="10" height="1" fill="#272d6a"/><rect x="0" y="6" width="11" height="1" fill="#272d6a"/><rect x="0" y="8" width="6" height="1" fill="#272d6a"/><rect x="0" y="10" width="9" height="1" fill="#272d6a"/><rect x="0" y="12" width="12" height="1" fill="#272d6a"/></svg>
<svg style="position:absolute;left:683px;top:228px;shape-rendering:crispEdges;" width="20" height="16" viewBox="0 0 20 16"><rect x="0" y="0" width="12" height="1" fill="#272d6a"/><rect x="3" y="2" width="6" height="1" fill="#272d6a"/><rect x="0" y="4" width="12" height="1" fill="#272d6a"/><rect x="2" y="6" width="8" height="1" fill="#272d6a"/><rect x="1" y="8" width="10" height="1" fill="#272d6a"/><rect x="3" y="10" width="6" height="1" fill="#272d6a"/><rect x="0" y="12" width="12" height="1" fill="#272d6a"/></svg>
<svg style="position:absolute;left:715px;top:228px;shape-rendering:crispEdges;" width="20" height="16" viewBox="0 0 20 16"><rect x="0" y="0" width="12" height="1" fill="#272d6a"/><rect x="6" y="2" width="6" height="1" fill="#272d6a"/><rect x="2" y="4" width="10" height="1" fill="#272d6a"/><rect x="1" y="6" width="11" height="1" fill="#272d6a"/><rect x="6" y="8" width="6" height="1" fill="#272d6a"/><rect x="3" y="10" width="9" height="1" fill="#272d6a"/><rect x="0" y="12" width="12" height="1" fill="#272d6a"/></svg>
<svg style="position:absolute;left:747px;top:228px;shape-rendering:crispEdges;" width="20" height="16" viewBox="0 0 20 16"><rect x="0" y="0" width="12" height="1" fill="#272d6a"/><rect x="0" y="2" width="12" height="1" fill="#272d6a"/><rect x="0" y="4" width="12" height="1" fill="#272d6a"/><rect x="0" y="6" width="12" height="1" fill="#272d6a"/><rect x="0" y="8" width="12" height="1" fill="#272d6a"/><rect x="0" y="10" width="12" height="1" fill="#272d6a"/><rect x="0" y="12" width="12" height="1" fill="#272d6a"/></svg>
<svg style="position:absolute;left:780px;top:229px;" width="12" height="11" viewBox="0 0 12 11"><circle cx="5" cy="5.5" r="5" fill="#272d6a"/><circle cx="4.5" cy="5" r="2.8" fill="#aaa"/></svg>
<div style="position:absolute;left:143px;top:253px;width:647px;height:319px;background:#fff;"></div>
<div style="position:absolute;left:143px;top:253px;width:646px;height:1px;background:#000;"></div>
<div style="position:absolute;left:143px;top:253px;width:1px;height:347px;background:#000;"></div>
<div style="position:absolute;left:775px;top:254px;width:1px;height:318px;background:#e2e2e2;"></div>
<div style="position:absolute;left:776px;top:254px;width:13px;height:318px;background:#fbfbfb;"></div>
<div style="position:absolute;left:779px;top:256px;width:6px;height:28px;background:#b4b4b4;border-radius:3px;"></div>
<div style="position:absolute;left:144px;top:254px;width:631px;height:318px;overflow:hidden">
<div class="t" style="left:20.30px;top:97.73px;font-size:38px;line-height:38px;color:#000;letter-spacing:0.000px;">E dükkan</div>
<div class="t" style="left:19.30px;top:177.28px;font-size:24px;line-height:24px;color:#4a5454;font-weight:bold;letter-spacing:0.080px;">kendiniz yapın,</div>
<div class="t" style="left:19.30px;top:210.28px;font-size:24px;line-height:24px;color:#4a5454;font-weight:bold;letter-spacing:0.110px;">internet'de yayınlayın.</div>
<div class="t" style="left:20.00px;top:263.66px;font-size:16px;line-height:16px;color:#000;letter-spacing:0.000px;">İşletmenizi, sanatınızı, ürettiklerinizi</div>
<div class="t" style="left:20.50px;top:285.96px;font-size:16px;line-height:16px;color:#000;letter-spacing:0.030px;">Türkiye'de, diğer ülkelerde sergileyin-duyurun</div>
<div class="t" style="left:20.00px;top:307.96px;font-size:16px;line-height:16px;color:#000;letter-spacing:0.000px;">İnternet'de görünür olun</div>
</div>
<div style="position:absolute;left:502px;top:311px;width:165px;height:73px;border:2px solid #0000ff;box-sizing:border-box;"></div>
<div class="t" style="left:514.00px;top:338.12px;font-size:19px;line-height:19px;color:#111;letter-spacing:0.260px;">html düzenleyici</div>
<div style="position:absolute;left:146px;top:570px;width:80px;height:28px;background:#fefefe;border:1px solid #dedede;border-bottom:none;box-sizing:border-box;"></div>
<div style="position:absolute;left:146px;top:597px;width:80px;height:1px;background:#e4e4e4;"></div>
<svg style="position:absolute;left:155px;top:577px;" width="15" height="14" viewBox="0 0 15 14"><path d="M6 8 L12.8 1.8" stroke="#163a6e" stroke-width="4.2" stroke-linecap="round"/><path d="M3.2 10.2 L6.5 7.5 L7.8 9 L4.5 11.8 Z" fill="#163a6e"/><path d="M0.8 13.3 L4 10.5 L5 11.5 Z" fill="#163a6e"/><path d="M7.8 5.2 L9.6 7.1" stroke="#fefefe" stroke-width="0.9"/><path d="M9.5 2.5 L12 0.8" stroke="#5a7ab0" stroke-width="0.8"/></svg>
<div class="t" style="left:172.30px;top:577.60px;font-size:13px;line-height:13px;color:#3c3c3c;letter-spacing:0.382px;">Normal</div>
<svg style="position:absolute;left:233px;top:577px;" width="24" height="12" viewBox="0 0 24 12"><rect x="1.5" y="1.5" width="22" height="10" rx="2" fill="#272d6a"/><rect x="0.8" y="0.8" width="21" height="9.5" rx="2" fill="#f6f2bc" stroke="#272d6a" stroke-width="1.4"/><text x="5.5" y="8.6" font-size="8.2" font-weight="bold" fill="#272d6a" font-family="Liberation Sans" textLength="11" lengthAdjust="spacingAndGlyphs">TD</text></svg>
<div class="t" style="left:259.30px;top:576.60px;font-size:13px;line-height:13px;color:#3c3c3c;letter-spacing:0.308px;">HTML Etiketleri</div>
<svg style="position:absolute;left:367px;top:576px;" width="38" height="15" viewBox="0 0 38 15"><path d="M5 1.5 L1.2 7.5 L5 13.5 M33 1.5 L36.8 7.5 L33 13.5" fill="none" stroke="#272d6a" stroke-width="1.6"/><text x="6.5" y="11.5" font-size="10" font-weight="bold" fill="#272d6a" font-family="Liberation Sans" textLength="25" lengthAdjust="spacingAndGlyphs">HTML</text></svg>
<div class="t" style="left:407.00px;top:576.60px;font-size:13px;line-height:13px;color:#3c3c3c;letter-spacing:0.038px;">Kaynak</div>
<svg style="position:absolute;left:467px;top:577px;" width="20" height="13" viewBox="0 0 20 13"><g stroke="#272d6a" stroke-width="2.1" fill="none" stroke-linecap="square"><path d="M2 2.5 L5 6 L2 10.5 M17 2.5 L14 6 L17 10.5 M5 6 L9.5 3 L14 6 M5 6 L9.5 8 L14 6 M9.5 8 L6 10.5 M9.5 8 L13 10.5"/></g><circle cx="9.5" cy="2.2" r="1.8" fill="#272d6a"/></svg>
<div class="t" style="left:491.40px;top:576.60px;font-size:13px;line-height:13px;color:#3c3c3c;letter-spacing:0.097px;">Önizleme</div>
<svg style="position:absolute;left:155px;top:609px;" width="14" height="14" viewBox="0 0 14 14"><defs><radialGradient id="gg" cx="0.35" cy="0.3" r="0.75"><stop offset="0" stop-color="#7aa0ff"/><stop offset="1" stop-color="#1f35b8"/></radialGradient></defs><circle cx="7" cy="7" r="6.5" fill="url(#gg)" stroke="#1b2a8a" stroke-width="0.6"/><path d="M4 3 Q6 2 7 4 Q6 6 8 7 Q10 8 9 10 Q7 11 6 9 Q5 7 4 6 Z" fill="#3fae3a"/><path d="M10 3 Q12 4 12 6 L11 5 Z" fill="#3fae3a"/></svg>
<svg style="position:absolute;left:188.5px;top:610px;" width="17" height="13" viewBox="0 0 17 13"><rect x="0.5" y="0.5" width="16" height="12" rx="1.5" fill="#efe6dc" stroke="#a08c78" stroke-width="1"/><path d="M1 1.5 L8.5 7.5 L16 1.5 M1 11.5 L6.5 6.5 M16 11.5 L10.5 6.5" fill="none" stroke="#b4a08c" stroke-width="1"/></svg>
<svg style="position:absolute;left:222.5px;top:609px;" width="17" height="14" viewBox="0 0 17 14"><path d="M4 6 L14.5 5 L15 13.5 L3.5 13.5 Z" fill="#f0f0f0" stroke="#6a6a6a" stroke-width="0.8"/><path d="M6 11 L11 10.5" stroke="#aaa" stroke-width="0.8"/><defs><radialGradient id="cg" cx="0.35" cy="0.35" r="0.7"><stop offset="0" stop-color="#7a9aff"/><stop offset="1" stop-color="#1a2ab0"/></radialGradient></defs><circle cx="4.6" cy="4.8" r="4.3" fill="url(#cg)"/><path d="M2.5 2.2 Q4.5 2.5 5 4 Q6 5.5 7 6.5 Q6 8 4.5 6.5 Q3.5 5 2.3 4 Z" fill="#50c050"/><path d="M15.5 0.8 Q17 1.5 16 3.5 L12.5 9 L11 8.2 L14 2 Q14.5 0.8 15.5 0.8 Z" fill="#8ac4f4" stroke="#3a7ac0" stroke-width="0.6"/><path d="M11 8.2 L12.5 9 L10.5 12.5 L9.8 12 Z" fill="#222"/></svg>
<svg style="position:absolute;left:256px;top:609px;" width="16" height="14" viewBox="0 0 16 14"><path d="M0.8 1.5 L10 1.5 L10 13 L0.8 13 Z" fill="#f2f2f2" stroke="#8a8a8a" stroke-width="0.8"/><path d="M2.5 6 L5 6 M2 9 L4 9" stroke="#aaa" stroke-width="1"/><g fill="#52c41a" stroke="#2a8a0a" stroke-width="0.5"><circle cx="9.5" cy="2.2" r="1.8"/><circle cx="13" cy="2.8" r="1.8"/><rect x="7.2" y="3.5" width="4.5" height="4" rx="1.5"/><rect x="11" y="4" width="4.5" height="4" rx="1.5"/><rect x="7" y="7" width="4.5" height="3.5" rx="1.5"/><rect x="11" y="7.5" width="4.5" height="3.5" rx="1.5"/><rect x="7.5" y="10" width="3.5" height="3.5" rx="1.2"/><rect x="11.5" y="10.5" width="3.5" height="3" rx="1.2"/></g></svg>
<div class="t" style="left:299.40px;top:609.40px;font-size:13px;line-height:13px;color:#3c3c3c;letter-spacing:0.385px;">&lt;body&gt;</div>
<svg style="position:absolute;left:744px;top:610px;" width="27" height="10" viewBox="0 0 27 10"><rect x="0.5" y="3.5" width="26" height="3" fill="#f4f4f4" stroke="#1a1a1a" stroke-width="1"/><rect x="8.5" y="0.5" width="10" height="9" rx="2.5" fill="#e4e8ee" stroke="#1a1a1a" stroke-width="1"/><rect x="11.5" y="0.5" width="1.6" height="9" fill="#1a1a1a"/><rect x="14" y="0.5" width="2" height="9" fill="#1a1a1a"/></svg>
</body></html>
